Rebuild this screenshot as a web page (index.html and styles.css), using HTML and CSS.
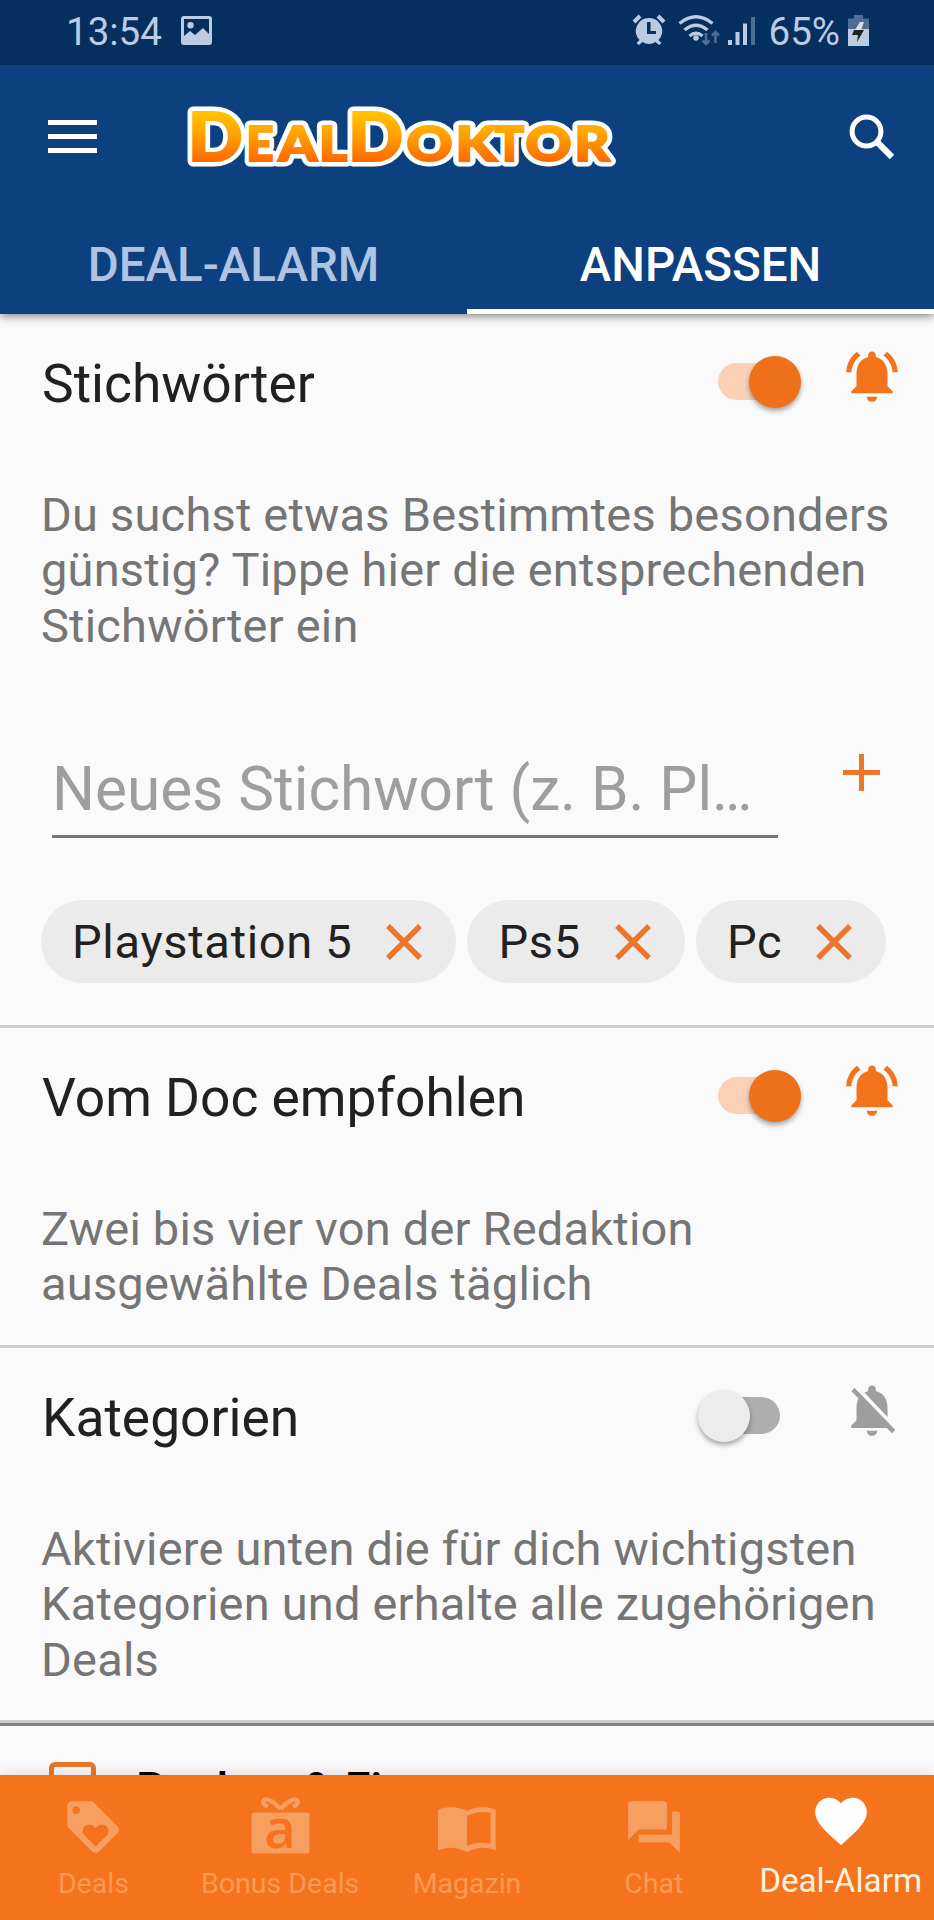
FILE: index.html
```html
<!DOCTYPE html>
<html lang="de">
<head>
<meta charset="utf-8">
<title>DealDoktor</title>
<link rel="stylesheet" href="styles.css">
</head>
<body>
<svg class="sprite" aria-hidden="true">
  <symbol id="bell-on" viewBox="0 0 24 24"><path d="M7.58 4.08L6.15 2.65C3.75 4.48 2.17 7.3 2.03 10.5h2c.15-2.65 1.51-4.97 3.55-6.42zm12.39 6.42h2c-.15-3.2-1.73-6.02-4.12-7.85l-1.42 1.43c2.02 1.45 3.39 3.77 3.54 6.42zM18 11c0-3.07-1.64-5.64-4.5-6.32V4c0-.83-.67-1.5-1.5-1.5s-1.5.67-1.5 1.5v.68C7.63 5.36 6 7.92 6 11v5l-2 2v.7h16V18l-2-2v-5zm-6 11c.14 0 .27-.01.4-.04.65-.14 1.18-.58 1.44-1.18.1-.24.15-.5.15-.78h-4c.01 1.1.9 2 2.01 2z"/></symbol>
  <symbol id="bell-off" viewBox="0 0 24 24"><path d="M20 18.69L7.84 6.14 5.27 3.49 4 4.76l2.8 2.8v.01c-.52.99-.8 2.16-.8 3.42v5l-2 2v1h13.73l2 2L21 19.72l-1-1.03zM12 22c1.11 0 2-.89 2-2h-4c0 1.11.89 2 2 2zm6-7.32V11c0-3.08-1.64-5.64-4.5-6.32V4c0-.83-.67-1.5-1.5-1.5s-1.5.67-1.5 1.5v.68c-.15.03-.29.08-.42.12-.1.03-.2.07-.3.11h-.01c-.01 0-.01 0-.02.01-.23.09-.46.2-.68.31 0 0-.01 0-.01.01L18 14.68z"/></symbol>
  <symbol id="close" viewBox="0 0 36 36"><path d="M2 2L34 34M34 2L2 34" fill="none" stroke="currentColor" stroke-width="5.400"/></symbol>
</svg>

<header class="top">
  <div class="status">
    <span class="clock">13:54</span>
    <svg class="picture" viewBox="0 0 31 30"><path fill-rule="evenodd" d="M3 0h25a3 3 0 0 1 3 3v23a3 3 0 0 1-3 3H3a3 3 0 0 1-3-3V3a3 3 0 0 1 3-3zM3 3v17l6-5 5 4 8-7 6 6V3zM9.500 6a3.200 3.200 0 1 1 0 6.400a3.200 3.200 0 1 1 0-6.400z"/></svg>
    <svg class="indicators" viewBox="0 0 124 34">
      <g>
        <path fill-rule="evenodd" d="M17 4a13 13 0 0 1 9.500 22l3 3-2.500 2-3.500-3a13 13 0 0 1-13 0l-3.500 3-2.500-2 3-3A13 13 0 0 1 17 4zM15 8v12h9v-3h-5.500V8z"/>
        <path d="M2 8l6-6M32 8l-6-6" fill="none" stroke="currentColor" stroke-width="4"/>
      </g>
      <g fill="none" stroke="currentColor" stroke-width="3.200">
        <path d="M47.500 9.500Q64 -4 80.500 9.500M52.500 16Q64 6.500 75.500 16M57.500 22Q64 16.500 70.500 22"/>
      </g>
      <circle cx="64" cy="24" r="2.800"/>
      <g class="faint" fill="none" stroke="currentColor" stroke-width="2.600"><path d="M74 19v11M70.500 26.500l3.500 3.500 3.500-3.500M83.500 29V18M80 21.500l3.500-3.500 3.500 3.500"/></g>
      <path d="M96 26h4v5h-4zM103.500 18h4v13h-4zM111 9.500h4V31h-4z"/>
      <path class="faint" d="M119 3h4v28h-4z"/>
    </svg>
    <span class="percent">65%</span>
    <svg class="battery" viewBox="0 0 21 31"><path class="faint" d="M6 0h9v3.500h6V14H0V3.500h6z"/><path d="M0 14h21v17H0z"/><path class="light" d="M12 7L5 18h7l4-11z"/><path class="bolt" d="M6 15h10l-7 12 1-7H4z"/></svg>
  </div>
  <div class="appbar">
    <svg class="menu" viewBox="0 0 49 33"><path d="M0 0h49v5H0zM0 14h49v5H0zM0 28h49v5H0z"/></svg>
    <svg class="logo" viewBox="0 0 440 70">
      <defs>
        <linearGradient id="gold" gradientUnits="userSpaceOnUse" x1="0" y1="10" x2="0" y2="60">
          <stop offset="0" stop-color="#ffc400"/><stop offset=".45" stop-color="#ffa200"/><stop offset="1" stop-color="#ff6700"/>
        </linearGradient>
        <g id="wordmark">
          <text class="big" x="8" y="58.500" textLength="54.500" lengthAdjust="spacingAndGlyphs">D</text>
          <text x="66.500" y="58.500" textLength="27" lengthAdjust="spacingAndGlyphs">E</text>
          <text x="98.500" y="58.500" textLength="38.500" lengthAdjust="spacingAndGlyphs">A</text>
          <text x="139" y="58.500" textLength="28" lengthAdjust="spacingAndGlyphs">L</text>
          <text class="big" x="168" y="58.500" textLength="55" lengthAdjust="spacingAndGlyphs">D</text>
          <text x="226.500" y="58.500" textLength="46" lengthAdjust="spacingAndGlyphs">O</text>
          <text x="275.500" y="58.500" textLength="41" lengthAdjust="spacingAndGlyphs">K</text>
          <text x="315" y="58.500" textLength="29" lengthAdjust="spacingAndGlyphs">T</text>
          <text x="345.500" y="58.500" textLength="46" lengthAdjust="spacingAndGlyphs">O</text>
          <text x="394.500" y="58.500" textLength="35" lengthAdjust="spacingAndGlyphs">R</text>
        </g>
      </defs>
      <use href="#wordmark" class="outline"/>
      <use href="#wordmark" class="face"/>
    </svg>
    <svg class="search" viewBox="0 0 46 46"><circle cx="17.500" cy="17.500" r="14.400" fill="none" stroke="currentColor" stroke-width="5"/><path d="M28 28l15 15" fill="none" stroke="currentColor" stroke-width="6.200"/></svg>
  </div>
  <nav class="tabs">
    <a class="tab">DEAL-ALARM</a>
    <a class="tab active">ANPASSEN</a>
  </nav>
</header>

<main class="content">
  <section class="block keywords">
    <div class="head"><h2>Stichwörter</h2><span class="switch on"></span><svg class="bell on"><use href="#bell-on"/></svg></div>
    <p>Du suchst etwas Bestimmtes besonders günstig? Tippe hier die entsprechenden Stichwörter ein</p>
    <div class="entry">
      <div class="field">Neues Stichwort (z. B. Pl…</div>
      <svg class="plus" viewBox="0 0 37 37"><path d="M0 16h16V0h5v16h16v5H21v16h-5V21H0z"/></svg>
    </div>
    <div class="chips">
      <span class="chip">Playstation 5<svg><use href="#close"/></svg></span>
      <span class="chip">Ps5<svg><use href="#close"/></svg></span>
      <span class="chip">Pc<svg><use href="#close"/></svg></span>
    </div>
  </section>
  <section class="block doc">
    <div class="head"><h2>Vom Doc empfohlen</h2><span class="switch on"></span><svg class="bell on"><use href="#bell-on"/></svg></div>
    <p>Zwei bis vier von der Redaktion ausgewählte Deals täglich</p>
  </section>
  <section class="block categories">
    <div class="head"><h2>Kategorien</h2><span class="switch"></span><svg class="bell"><use href="#bell-off"/></svg></div>
    <p>Aktiviere unten die für dich wichtigsten Kategorien und erhalte alle zugehörigen Deals</p>
  </section>
  <div class="category"><span class="checkbox"></span>Banken &amp; Finanzen</div>
</main>

<nav class="bottom">
  <a class="item">
    <svg viewBox="0 0 24 24"><path d="M21.410 11.580l-9-9C12.050 2.220 11.550 2 11 2H4c-1.100 0-2 .9-2 2v7c0 .55.22 1.050.59 1.420l9 9c.36.36.86.58 1.410.58s1.050-.22 1.410-.59l7-7c.37-.36.59-.86.59-1.410s-.23-1.060-.59-1.420zM5.500 7C4.670 7 4 6.330 4 5.500S4.670 4 5.500 4 7 4.670 7 5.500 6.330 7 5.500 7zm11.770 8.270L13 19.540l-4.270-4.270C8.280 14.810 8 14.190 8 13.500c0-1.380 1.120-2.500 2.500-2.500.69 0 1.320.28 1.770.74l.73.72.73-.73c.45-.45 1.080-.73 1.770-.73 1.380 0 2.500 1.120 2.500 2.500 0 .69-.28 1.320-.73 1.770z"/></svg>
    <span>Deals</span>
  </a>
  <a class="item">
    <svg viewBox="0 0 62 62"><rect x="2.500" y="16.500" width="58" height="41" rx="2.500"/><path d="M31.500 13C27 8 21 3.500 17 3.500C13 3.500 13 8 19 10.500M31.500 13C36 8 42 3.500 46 3.500C50 3.500 50 8 44 10.500" fill="none" stroke="currentColor" stroke-width="4.500"/><text class="letter" x="31" y="51.500" text-anchor="middle">a</text></svg>
    <span>Bonus Deals</span>
  </a>
  <a class="item">
    <svg viewBox="0 0 62 62"><path fill-rule="evenodd" d="M2 14C8 10.500 23 10 31 15C39 10 54 10.500 59.700 14V54.500C50 50 40 51 31 56C22 51 12 50 2 54.500zM31 20V50C38 46.500 46 46 54.500 47.500V17C47 15 39 16 31 20z"/></svg>
    <span>Magazin</span>
  </a>
  <a class="item">
    <svg viewBox="0 0 24 24"><path d="M21 6h-2v9H6v2c0 .55.45 1 1 1h11l4 4V7c0-.55-.45-1-1-1zm-4 6V3c0-.55-.45-1-1-1H3c-.55 0-1 .45-1 1v14l4-4h10c.55 0 1-.45 1-1z"/></svg>
    <span>Chat</span>
  </a>
  <a class="item current">
    <svg viewBox="0 0 24 24"><path d="M12 21.350l-1.450-1.320C5.400 15.360 2 12.280 2 8.500 2 5.420 4.420 3 7.500 3c1.740 0 3.410.81 4.500 2.090C13.090 3.810 14.760 3 16.500 3 19.580 3 22 5.420 22 8.500c0 3.780-3.400 6.860-8.550 11.540L12 21.350z"/></svg>
    <span>Deal-Alarm</span>
  </a>
</nav>
</body>
</html>
```
FILE: styles.css
```css
* { box-sizing: border-box; }
body {
  margin: 0;
  width: 934px;
  height: 1920px;
  display: flex;
  flex-direction: column;
  overflow: hidden;
  background: #fafafa;
  font-family: Roboto, "Liberation Sans", sans-serif;
}
svg { display: block; fill: currentColor; flex: none; }
.sprite { width: 0; height: 0; position: absolute; }

/* header */
.top {
  height: 314px;
  flex: none;
  background: #0c407e;
  color: #fff;
  box-shadow: 0 2px 9px rgba(0, 0, 0, .5);
  z-index: 1;
}
.status {
  height: 65px;
  display: flex;
  align-items: flex-start;
  background: #052f5f;
  color: #bccbe2;
  padding: 0 65px 0 66px;
  font-size: 38.500px;
  line-height: 63px;
}
.clock { width: 115px; }
.picture { width: 31px; height: 30px; margin-top: 16px; }
.indicators { width: 124px; height: 34px; margin: 14px 0 0 420px; }
.percent { width: 79px; margin-left: 12.500px; }
.battery { width: 21px; height: 31px; margin-top: 15px; }
.faint { opacity: .4; }
.battery .bolt { fill: #222; }
.battery .light { fill: #d3deec; }
.appbar { height: 145px; display: flex; align-items: flex-start; padding-left: 48px; }
.menu { width: 49px; height: 33px; margin-top: 55px; }
.logo { width: 440px; height: 70px; margin: 37px 0 0 83px; overflow: visible; }
.logo text { font-family: Lato, sans-serif; font-weight: 900; font-size: 48px; }
.logo .big { font-size: 67.500px; }
.logo .outline { fill: #fff; stroke: #fff; stroke-width: 11px; stroke-linejoin: round; }
.logo .face { fill: url(#gold); stroke: url(#gold); stroke-width: 2.200px; }
.search { width: 46px; height: 46px; margin: 49px 0 0 229px; }
.tabs { display: flex; height: 104px; }
.tab {
  flex: 1;
  padding-top: 22px;
  text-align: center;
  font-size: 47.500px;
  font-weight: 500;
  line-height: 67px;
  color: #adc5e2;
}
.tab.active { color: #fff; border-bottom: 5px solid #fff; }

/* content */
.content { flex: 1; overflow: hidden; }
.block { border-bottom: 3px solid #ccc; }
.keywords { height: 714px; }
.doc { height: 320px; }
.categories { height: 378px; border-bottom: 3px solid #808080; box-shadow: inset 0 -3px #ccc; }
.head { height: 162px; display: flex; align-items: flex-start; padding-left: 42px; }
h2 {
  width: 676px;
  margin: 0;
  padding-top: 40px;
  font-size: 53.300px;
  font-weight: 400;
  line-height: 60px;
  color: #212121;
}
.switch {
  width: 62px;
  height: 37px;
  margin-top: 49px;
  border-radius: 19px;
  background: #aeaeae;
  display: flex;
  align-items: center;
}
.switch::before {
  content: "";
  flex: none;
  width: 52px;
  height: 52px;
  margin-left: -20px;
  border-radius: 50%;
  background: #ececec;
  box-shadow: 0 3px 5px rgba(0, 0, 0, .35);
}
.switch.on { background: #fad1b7; }
.switch.on::before { margin-left: 31px; background: #ee701a; }
.bell { width: 62px; height: 62px; margin: 31px 0 0 61px; color: #9e9e9e; }
.bell.on { color: #f2731c; }
p {
  margin: 0;
  padding: 11px 30px 0 41px;
  font-size: 47px;
  letter-spacing: .2px;
  line-height: 55.300px;
  color: #757575;
}
.keywords p { height: 222px; }
.entry { height: 202px; display: flex; padding-left: 52px; }
.field {
  width: 726px;
  height: 140px;
  border-bottom: 3px solid #757575;
  padding-top: 57px;
  font-size: 60.300px;
  line-height: 70px;
  color: #9e9e9e;
  white-space: nowrap;
}
.plus { width: 37px; height: 37px; margin: 56px 0 0 65px; color: #e9762a; }
.chips { display: flex; gap: 11px; padding-left: 41px; }
.chip {
  height: 83px;
  border-radius: 42px;
  background: #ebebeb;
  display: flex;
  align-items: center;
  gap: 34px;
  padding: 0 34px 0 31px;
  font-size: 47px;
  letter-spacing: .7px;
  color: #212121;
}
.chip svg { width: 36px; height: 36px; color: #e9762a; }
.category {
  height: 120px;
  display: flex;
  padding: 36px 0 0 49px;
  font-size: 46.700px;
  font-weight: 500;
  line-height: 55px;
  color: #000;
}
.checkbox { width: 47px; height: 47px; margin-right: 40px; border: 5px solid #e9762a; border-radius: 6px; }

/* bottom navigation */
.bottom {
  height: 145px;
  flex: none;
  display: grid;
  grid-template-columns: repeat(5, 1fr);
  background: #f5731d;
  color: #f79e61;
  box-shadow: 0 0 14px rgba(0, 0, 0, .15);
  z-index: 1;
}
.item {
  display: flex;
  flex-direction: column;
  align-items: center;
  padding-top: 21px;
  font-size: 28.500px;
  line-height: 34px;
  white-space: nowrap;
}
.item svg { width: 62px; height: 62px; margin-bottom: 9px; }
.item span { color: #fb9a55; }
.item.current { padding-top: 15px; font-size: 33.200px; }
.item.current svg { color: #fff; margin-bottom: 12px; }
.item.current span { color: #fff3e0; }
.letter { font-family: "Open Sans", sans-serif; font-size: 55px; font-weight: 600; fill: #f5731d; }
```
